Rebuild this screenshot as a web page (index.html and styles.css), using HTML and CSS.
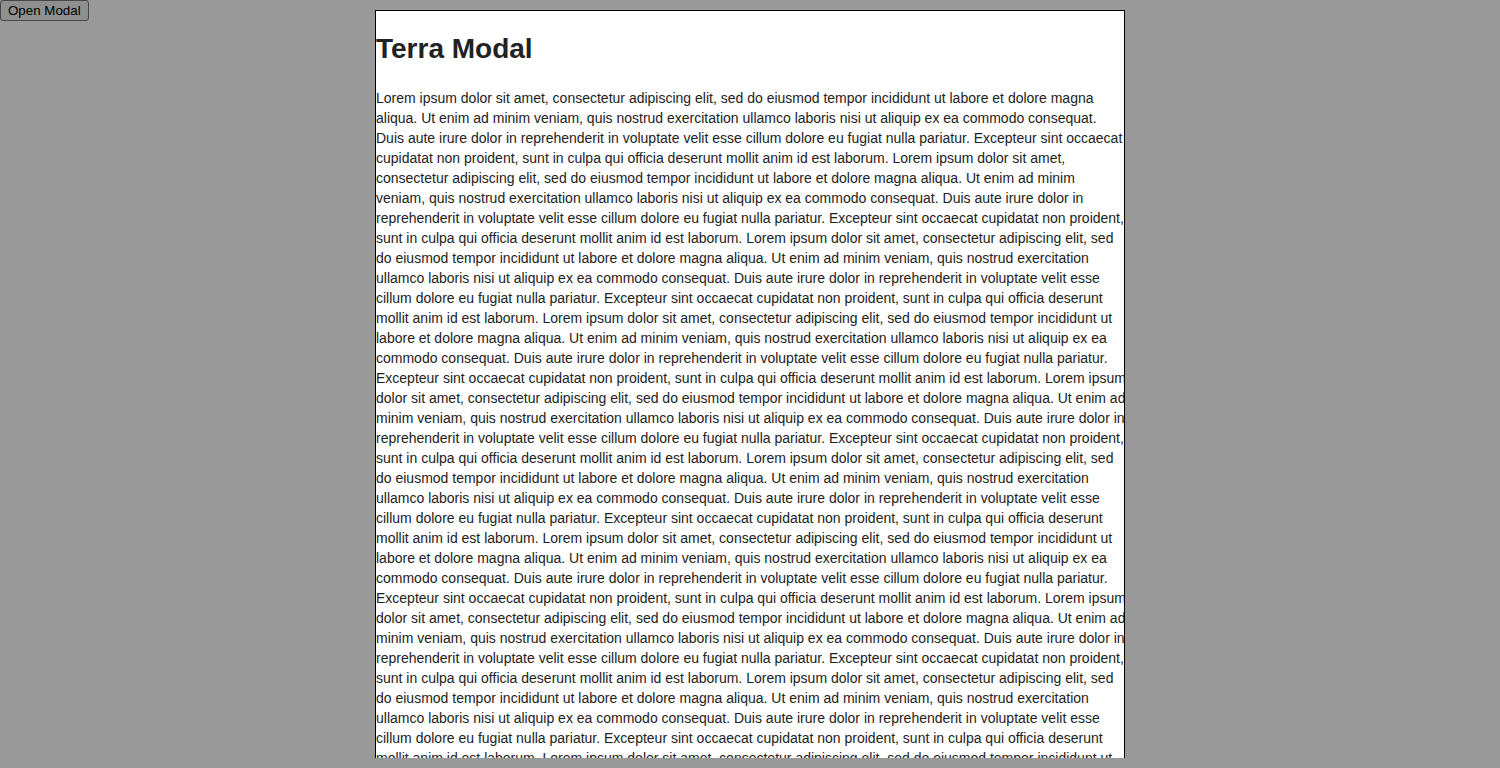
FILE: index.html
```html
<!DOCTYPE html>
<html>
<head>
<meta charset="utf-8">
<link rel="stylesheet" href="styles.css">
</head>
<body>
<button class="open-btn">Open Modal</button>
<div class="backdrop">
  <div class="modal">
    <h2 class="modal-title">Terra Modal</h2>
    <p class="modal-text">Lorem ipsum dolor sit amet, consectetur adipiscing elit, sed do eiusmod tempor incididunt ut labore et dolore magna aliqua. Ut enim ad minim veniam, quis nostrud exercitation ullamco laboris nisi ut aliquip ex ea commodo consequat. Duis aute irure dolor in reprehenderit in voluptate velit esse cillum dolore eu fugiat nulla pariatur. Excepteur sint occaecat cupidatat non proident, sunt in culpa qui officia deserunt mollit anim id est laborum. Lorem ipsum dolor sit amet, consectetur adipiscing elit, sed do eiusmod tempor incididunt ut labore et dolore magna aliqua. Ut enim ad minim veniam, quis nostrud exercitation ullamco laboris nisi ut aliquip ex ea commodo consequat. Duis aute irure dolor in reprehenderit in voluptate velit esse cillum dolore eu fugiat nulla pariatur. Excepteur sint occaecat cupidatat non proident, sunt in culpa qui officia deserunt mollit anim id est laborum. Lorem ipsum dolor sit amet, consectetur adipiscing elit, sed do eiusmod tempor incididunt ut labore et dolore magna aliqua. Ut enim ad minim veniam, quis nostrud exercitation ullamco laboris nisi ut aliquip ex ea commodo consequat. Duis aute irure dolor in reprehenderit in voluptate velit esse cillum dolore eu fugiat nulla pariatur. Excepteur sint occaecat cupidatat non proident, sunt in culpa qui officia deserunt mollit anim id est laborum. Lorem ipsum dolor sit amet, consectetur adipiscing elit, sed do eiusmod tempor incididunt ut labore et dolore magna aliqua. Ut enim ad minim veniam, quis nostrud exercitation ullamco laboris nisi ut aliquip ex ea commodo consequat. Duis aute irure dolor in reprehenderit in voluptate velit esse cillum dolore eu fugiat nulla pariatur. Excepteur sint occaecat cupidatat non proident, sunt in culpa qui officia deserunt mollit anim id est laborum. Lorem ipsum dolor sit amet, consectetur adipiscing elit, sed do eiusmod tempor incididunt ut labore et dolore magna aliqua. Ut enim ad minim veniam, quis nostrud exercitation ullamco laboris nisi ut aliquip ex ea commodo consequat. Duis aute irure dolor in reprehenderit in voluptate velit esse cillum dolore eu fugiat nulla pariatur. Excepteur sint occaecat cupidatat non proident, sunt in culpa qui officia deserunt mollit anim id est laborum. Lorem ipsum dolor sit amet, consectetur adipiscing elit, sed do eiusmod tempor incididunt ut labore et dolore magna aliqua. Ut enim ad minim veniam, quis nostrud exercitation ullamco laboris nisi ut aliquip ex ea commodo consequat. Duis aute irure dolor in reprehenderit in voluptate velit esse cillum dolore eu fugiat nulla pariatur. Excepteur sint occaecat cupidatat non proident, sunt in culpa qui officia deserunt mollit anim id est laborum. Lorem ipsum dolor sit amet, consectetur adipiscing elit, sed do eiusmod tempor incididunt ut labore et dolore magna aliqua. Ut enim ad minim veniam, quis nostrud exercitation ullamco laboris nisi ut aliquip ex ea commodo consequat. Duis aute irure dolor in reprehenderit in voluptate velit esse cillum dolore eu fugiat nulla pariatur. Excepteur sint occaecat cupidatat non proident, sunt in culpa qui officia deserunt mollit anim id est laborum. Lorem ipsum dolor sit amet, consectetur adipiscing elit, sed do eiusmod tempor incididunt ut labore et dolore magna aliqua. Ut enim ad minim veniam, quis nostrud exercitation ullamco laboris nisi ut aliquip ex ea commodo consequat. Duis aute irure dolor in reprehenderit in voluptate velit esse cillum dolore eu fugiat nulla pariatur. Excepteur sint occaecat cupidatat non proident, sunt in culpa qui officia deserunt mollit anim id est laborum. Lorem ipsum dolor sit amet, consectetur adipiscing elit, sed do eiusmod tempor incididunt ut labore et dolore magna aliqua. Ut enim ad minim veniam, quis nostrud exercitation ullamco laboris nisi ut aliquip ex ea commodo consequat. Duis aute irure dolor in reprehenderit in voluptate velit esse cillum dolore eu fugiat nulla pariatur. Excepteur sint occaecat cupidatat non proident, sunt in culpa qui officia deserunt mollit anim id est laborum. Lorem ipsum dolor sit amet, consectetur adipiscing elit, sed do eiusmod tempor incididunt ut labore et dolore magna aliqua. Ut enim ad minim veniam, quis nostrud exercitation ullamco laboris nisi ut aliquip ex ea commodo consequat. Duis aute irure dolor in reprehenderit in voluptate velit esse cillum dolore eu fugiat nulla pariatur. Excepteur sint occaecat cupidatat non proident, sunt in culpa qui officia deserunt mollit anim id est laborum. Lorem ipsum dolor sit amet, consectetur adipiscing elit, sed do eiusmod tempor incididunt ut labore et dolore magna aliqua. Ut enim ad minim veniam, quis nostrud exercitation ullamco laboris nisi ut aliquip ex ea commodo consequat. Duis aute irure dolor in reprehenderit in voluptate velit esse cillum dolore eu fugiat nulla pariatur. Excepteur sint occaecat cupidatat non proident, sunt in culpa qui officia deserunt mollit anim id est laborum.</p>
  </div>
</div>
</body>
</html>
```

FILE: styles.css
```css
html, body {
  margin: 0;
  padding: 0;
  background: #ffffff;
  font-family: "Liberation Sans", Arial, sans-serif;
}

.open-btn {
  font-family: "Liberation Sans", Arial, sans-serif;
  font-size: 13.333px;
  margin: 0;
  padding: 2px 7px;
  background: #efefef;
  border: 1px solid #767676;
  border-radius: 3px;
  color: #000;
  display: block;
}

.backdrop {
  position: fixed;
  inset: 0;
  background: rgba(0, 0, 0, 0.4);
  display: flex;
  justify-content: center;
  align-items: flex-start;
  padding-top: 10px;
}

.modal {
  box-sizing: border-box;
  width: 750px;
  height: 748px;
  background: #ffffff;
  border: 1px solid #000;
  border-bottom: 0;
  overflow: hidden;
  color: #222222;
}

.modal-title {
  font-size: 28px;
  font-weight: bold;
  line-height: 32px;
  margin: 22px 0 23px;
}

.modal-text {
  font-size: 14px;
  line-height: 20px;
  margin: 0;
  width: 750px;
}
```
